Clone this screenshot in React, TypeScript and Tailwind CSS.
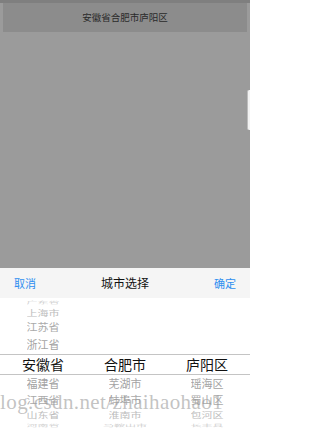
import React from "react";

const font = { fontFamily: '"Noto Sans CJK SC", "Liberation Sans", sans-serif' };

type Row = { h: string; text: string; cls: string };

const provinces: Row[] = [
  { h: "h-[8px]", text: "广东省", cls: "text-[11px] text-[#d0d0d0] scale-y-[0.35]" },
  { h: "h-[13px]", text: "上海市", cls: "text-[11px] text-[#bdbdbd] scale-y-[0.7]" },
  { h: "h-[16px]", text: "江苏省", cls: "text-[11px] text-[#aaaaaa] scale-y-[0.88]" },
  { h: "h-[18px]", text: "浙江省", cls: "text-[11px] text-[#a3a3a3]" },
];

const below: string[][] = [
  ["福建省", "江西省", "山东省", "河南省"],
  ["芜湖市", "蚌埠市", "淮南市", "马鞍山市"],
  ["瑶海区", "蜀山区", "包河区", "长丰县"],
];

const belowRows = [
  { h: "h-[18px]", cls: "text-[11px] text-[#a3a3a3]" },
  { h: "h-[16px]", cls: "text-[11px] text-[#aaaaaa] scale-y-[0.88]" },
  { h: "h-[13px]", cls: "text-[11px] text-[#bdbdbd] scale-y-[0.7]" },
  { h: "h-[9px]", cls: "text-[11px] text-[#d0d0d0] scale-y-[0.35]" },
];

function Column({ above, selected, items }: { above: Row[] | null; selected: string; items: string[] }) {
  return (
    <div className="flex-1 flex flex-col items-center">
      {provinces.map((r, i) => (
        <div key={i} className={`${r.h} flex items-center justify-center overflow-hidden`}>
          {above && <span className={`leading-none ${r.cls}`}>{above[i].text}</span>}
        </div>
      ))}
      <div className="h-[21px] flex items-center justify-center">
        <span className="text-[14px] leading-none text-[#111]">{selected}</span>
      </div>
      {belowRows.map((r, i) => (
        <div key={i} className={`${r.h} flex items-center justify-center overflow-hidden`}>
          <span className={`leading-none whitespace-nowrap ${r.cls}`}>{items[i]}</span>
        </div>
      ))}
    </div>
  );
}

export default function App() {
  return (
    <div className="relative w-[250px] h-[430px] overflow-hidden bg-[#9b9b9b] flex flex-col" style={font}>
      <div className="h-[3px] bg-[#7f7f7f]" />
      <div className="mx-[3px] h-[29px] bg-[#8c8c8c] flex items-center justify-center text-[9.5px] text-[#2a2a2a]">
        安徽省合肥市庐阳区
      </div>
      <div className="relative flex-1">
        <div className="absolute right-0 top-[58px] w-[3px] h-[40px] bg-[#f2f2f2] rounded-l-[2px] border-l border-[#bdbdbd]" />
      </div>
      <div className="h-[30px] bg-[#f5f5f5] flex items-center justify-between px-[14px]">
        <span className="text-[11px] text-[#2f8ff0]">取消</span>
        <span className="text-[12px] text-[#111]">城市选择</span>
        <span className="text-[11px] text-[#2f8ff0]">确定</span>
      </div>
      <div className="relative h-[132px] bg-white flex px-[2px]">
        <div className="absolute left-0 right-0 top-[56px] h-[21px] border-y border-[#c4c4c4]" />
        <Column above={provinces} selected="安徽省" items={below[0]} />
        <Column above={null} selected="合肥市" items={below[1]} />
        <Column above={null} selected="庐阳区" items={below[2]} />
        <div
          className="absolute left-0 top-[94px] text-[21px] leading-none text-[#9a9a9a]/60 whitespace-nowrap tracking-[0.4px]"
          style={{ fontFamily: '"Liberation Serif", "DejaVu Serif", serif' }}
        >
          log.csdn.net/zhaihaohao1
        </div>
      </div>
    </div>
  );
}
